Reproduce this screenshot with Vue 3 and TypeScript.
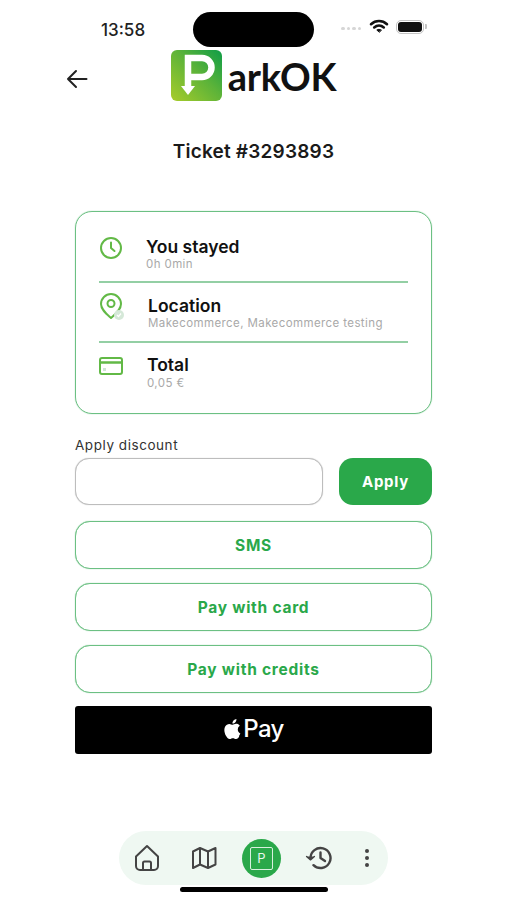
<script setup lang="ts">
interface InfoRow {
  id: string
  title: string
  sub: string
  indent: string
}
const rows: InfoRow[] = [
  { id: 'clock', title: 'You stayed', sub: '0h 0min', indent: 'row-a' },
  { id: 'pin', title: 'Location', sub: 'Makecommerce, Makecommerce testing', indent: 'row-b' },
  { id: 'card', title: 'Total', sub: '0,05 €', indent: 'row-c' },
]
const payOptions = ['SMS', 'Pay with card', 'Pay with credits']
</script>

<template>
  <div class="page">
    <div class="status">
      <span class="time">13:58</span>
      <div class="island"></div>
      <div class="status-right">
        <span class="dots"><i></i><i></i><i></i><i></i></span>
        <svg class="wifi" width="20" height="15" viewBox="0 0 20 15" fill="none" stroke="#111" stroke-linecap="round">
          <path d="M2 5.200C6.600 1 13.400 1 18 5.200" stroke-width="2.600" />
          <path d="M5.200 8.400c2.800-2.400 6.800-2.400 9.600 0" stroke-width="2.600" />
          <path d="M10 13l-2.200-2c1.200-.9 3.200-.9 4.400 0z" fill="#111" stroke-width="1" />
        </svg>
        <span class="battery"><span class="battery-fill"></span></span>
        <span class="battery-cap"></span>
      </div>
    </div>

    <header class="header">
      <svg class="back" width="22" height="20" viewBox="0 0 22 20" fill="none" stroke="#222" stroke-width="2" stroke-linecap="round" stroke-linejoin="round">
        <path d="M20.500 10H2M10 2l-8 8 8 8" />
      </svg>
      <div class="logo">
        <svg width="51" height="51" viewBox="0 0 51 51">
          <defs>
            <linearGradient id="logoGrad" x1="0" y1="1" x2="1" y2="0">
              <stop offset="0" stop-color="#a8cc2a" />
              <stop offset="0.55" stop-color="#5cb339" />
              <stop offset="1" stop-color="#0f9d47" />
            </linearGradient>
          </defs>
          <rect width="51" height="51" rx="6" fill="url(#logoGrad)" />
          <path d="M17 37V8h14a9.500 9.500 0 0 1 0 19H17" fill="none" stroke="#fff" stroke-width="6.500" />
          <path d="M10 36h14L17 45z" fill="#fff" />
        </svg>
        <span class="wordmark">arkOK</span>
      </div>
    </header>

    <h1 class="ticket">Ticket #3293893</h1>

    <main class="content">
      <section class="info-card">
        <div v-for="row in rows" :key="row.id" class="info-row" :class="row.indent">
          <svg v-if="row.id === 'clock'" class="info-icon" width="24" height="24" viewBox="0 0 24 24" fill="none" stroke="#62b946" stroke-width="2" stroke-linecap="round" stroke-linejoin="round">
            <circle cx="12" cy="12" r="10" />
            <path d="M12 6.500V12l3.500 3" />
          </svg>
          <svg v-else-if="row.id === 'pin'" class="info-icon pin-icon" width="26" height="30" viewBox="0 0 26 30" fill="none">
            <path d="M12 25C7 20.500 2 16.500 2 11a10 10 0 0 1 20 0c0 5.500-5 9.500-10 14z" stroke="#62b946" stroke-width="2" stroke-linejoin="round" />
            <circle cx="12" cy="10.500" r="3.500" stroke="#62b946" stroke-width="2" />
            <circle cx="20" cy="22" r="5" fill="#d5e8d8" />
            <path d="M18 22l1.500 1.500 2.500-3" stroke="#fff" stroke-width="1.200" />
          </svg>
          <svg v-else class="info-icon card-icon" width="24" height="18" viewBox="0 0 24 18" fill="none">
            <rect x="1" y="1" width="22" height="16" rx="2" stroke="#62b946" stroke-width="2" />
            <path d="M1 5.500h22" stroke="#62b946" stroke-width="2.500" />
            <rect x="4" y="11" width="3" height="3" fill="#cfe5d3" />
          </svg>
          <div class="info-text">
            <div class="info-title">{{ row.title }}</div>
            <div class="info-sub">{{ row.sub }}</div>
          </div>
        </div>
      </section>

      <label class="discount-label" for="discount">Apply discount</label>
      <div class="discount">
        <input id="discount" class="discount-input" type="text" />
        <button class="apply" type="button">Apply</button>
      </div>

      <button v-for="opt in payOptions" :key="opt" class="outline" type="button">{{ opt }}</button>

      <button class="apple" type="button">
        <svg width="19" height="22" viewBox="3 1 18 22" fill="#fff">
          <path d="M18.710 19.500c-.83 1.240-1.710 2.450-3.050 2.470-1.340.03-1.770-.79-3.290-.79-1.530 0-2 .77-3.270.82-1.310.05-2.300-1.320-3.140-2.530C4.250 17 2.940 12.450 4.700 9.390c.87-1.520 2.430-2.480 4.120-2.510 1.280-.02 2.500.87 3.290.87.78 0 2.210-1.070 3.720-.91.63.03 2.390.25 3.520 1.900-.09.06-2.100 1.230-2.080 3.650.03 2.900 2.540 3.860 2.570 3.870-.03.07-.4 1.380-1.330 2.740M13 3.500c.73-.83 1.940-1.460 2.940-1.500.13 1.170-.34 2.350-1.040 3.190-.69.85-1.830 1.510-2.950 1.420-.15-1.150.41-2.350 1.050-3.110z" />
        </svg>
        <span class="apple-pay">Pay</span>
      </button>
    </main>

    <nav class="nav">
      <svg width="26" height="28" viewBox="0 0 26 28" fill="none" stroke="#444" stroke-width="2" stroke-linejoin="round" stroke-linecap="round">
        <path d="M2 12.500 13 2l11 10.500V22a4 4 0 0 1-4 4H6a4 4 0 0 1-4-4z" />
        <path d="M9 26v-7a1.500 1.500 0 0 1 1.500-1.500h5A1.500 1.500 0 0 1 17 19v7" />
      </svg>
      <svg width="26" height="24" viewBox="0 0 26 24" fill="none" stroke="#444" stroke-width="2" stroke-linejoin="round">
        <path d="M2 5.500 9 2l8 3.500L24.500 2v16.500L17 22l-8-3.500L2 22z" />
        <path d="M9 2v16.500M17 5.500V22" />
      </svg>
      <div class="nav-active">
        <span class="nav-p">P</span>
      </div>
      <svg width="28" height="24" viewBox="0 0 28 24" fill="none" stroke="#444" stroke-width="2.400" stroke-linecap="round" stroke-linejoin="round">
        <path d="M5.500 12a10 10 0 1 1 3 7.200" />
        <path d="M1.500 10.500 5.500 14l4-3.500" fill="#444" stroke-width="1.200" />
        <path d="M15.500 6.500V12l4.500 3" />
      </svg>
      <svg width="6" height="20" viewBox="0 0 6 20" fill="#444">
        <circle cx="3" cy="3" r="2" />
        <circle cx="3" cy="10" r="2" />
        <circle cx="3" cy="17" r="2" />
      </svg>
    </nav>
    <div class="home-indicator"></div>
  </div>
</template>

<style>
html, body { margin: 0; background: #fff; }
</style>

<style scoped>
.page {
  position: relative;
  width: 507px;
  height: 900px;
  overflow: hidden;
  background: #fff;
  display: flex;
  flex-direction: column;
  font-family: Inter, "Liberation Sans", sans-serif;
  color: #111;
}
.status {
  display: grid;
  grid-template-columns: 193px 121px 1fr;
  align-items: center;
  height: 35px;
  margin-top: 12px;
  flex: none;
}
.time {
  font-size: 17px;
  font-weight: 500;
  padding-left: 101px;
  color: #222;
}
.island {
  height: 35px;
  background: #000;
  border-radius: 18px;
}
.status-right {
  display: flex;
  align-items: center;
  padding-left: 27px;
  margin-top: -6px;
}
.dots { display: flex; gap: 2px; margin-right: 8px; margin-top: 4px; }
.dots i { width: 3.500px; height: 3.500px; background: #d6d6d6; border-radius: 50%; }
.wifi { margin-right: 7px; }
.battery {
  width: 28px;
  height: 14px;
  padding: 1px;
  box-sizing: border-box;
  border: 1px solid #c4c4c4;
  border-radius: 5px;
  display: block;
}
.battery-fill { display: block; height: 100%; background: #111; border-radius: 3px; }
.battery-cap {
  width: 1.500px;
  height: 5px;
  margin-left: 1px;
  background: #c4c4c4;
  border-radius: 0 1px 1px 0;
}
.header {
  position: relative;
  flex: none;
  height: 51px;
  margin-top: 3px;
  display: flex;
  justify-content: center;
}
.back { position: absolute; left: 66px; top: 19px; }
.logo {
  display: flex;
  align-items: center;
  gap: 6px;
}
.wordmark {
  font-family: Lato, sans-serif;
  font-size: 38px;
  font-weight: 700;
  line-height: 51px;
  letter-spacing: -0.3px;
  color: #111;
  margin-top: 1px;
}
.ticket {
  flex: none;
  margin: 38px 0 0;
  text-align: center;
  font-size: 19px;
  font-weight: 600;
  line-height: 26px;
  letter-spacing: 0.2px;
  color: #1a1a1a;
}
.content {
  display: flex;
  flex-direction: column;
  padding: 0 75px;
  margin-top: 46px;
  flex: none;
}
.info-card {
  box-sizing: border-box;
  height: 203px;
  padding: 0 23px;
  border: 1px solid #6cc083;
  box-shadow: 0 0 1px #6cc083;
  border-radius: 17px;
  display: flex;
  flex-direction: column;
}
.info-row {
  display: flex;
  align-items: flex-start;
  box-sizing: border-box;
}
.row-a { height: 71px; padding-top: 24px; border-bottom: 2px solid #93cfa4; gap: 23px; }
.row-b { height: 60px; padding-top: 12px; border-bottom: 2px solid #93cfa4; gap: 23px; }
.row-c { flex: 1; padding-top: 11px; gap: 24px; }
.info-icon { flex: none; }
.pin-icon { margin-top: -2px; }
.card-icon { margin-top: 3px; }
.info-text { min-width: 0; }
.info-title {
  font-size: 17.500px;
  font-weight: 600;
  line-height: 22px;
  color: #111;
}
.info-sub {
  font-size: 11.500px;
  line-height: 14px;
  letter-spacing: 0.4px;
  color: #a9a9a9;
  margin-top: -1px;
}
.row-c .info-sub { margin-top: 0; }
.discount-label {
  font-size: 13.500px;
  line-height: 18px;
  letter-spacing: 0.55px;
  margin-top: 22px;
  color: #333;
}
.discount {
  display: flex;
  gap: 16px;
  margin-top: 4px;
  height: 47px;
}
.discount-input {
  flex: 1;
  min-width: 0;
  box-sizing: border-box;
  border: 1px solid #bdbdbd;
  box-shadow: 0 0 1px #bdbdbd;
  border-radius: 14px;
  background: #fff;
  outline: none;
}
.apply {
  width: 93px;
  border: 0;
  border-radius: 14px;
  background: #2aa84a;
  color: #fff;
  font: 700 15px Inter, sans-serif;
  letter-spacing: 0.7px;
}
.outline {
  height: 48px;
  margin-top: 14px;
  box-sizing: border-box;
  background: #fff;
  border: 1px solid #6cc083;
  box-shadow: 0 0 1px #6cc083;
  border-radius: 15px;
  color: #2aa84a;
  font: 700 15.500px Inter, sans-serif;
  letter-spacing: 0.75px;
}
.discount + .outline { margin-top: 16px; }
.apple {
  height: 48px;
  margin-top: 13px;
  border: 0;
  border-radius: 3px;
  background: #000;
  color: #fff;
  display: flex;
  align-items: center;
  justify-content: center;
  gap: 1px;
}
.apple svg { margin-top: -2px; }
.apple-pay {
  font: 500 24px/30px Inter, sans-serif;
  letter-spacing: -0.6px;
  margin-top: -2px;
}
.nav {
  position: absolute;
  left: 119px;
  bottom: 15px;
  width: 269px;
  height: 54px;
  box-sizing: border-box;
  background: #eff8f2;
  border-radius: 27px;
  display: grid;
  grid-template-columns: 56px 57px 59px 55px 42px;
  justify-items: center;
  align-items: center;
}
.nav-active {
  width: 39px;
  height: 39px;
  border-radius: 50%;
  background: #2aa84a;
  display: flex;
  align-items: center;
  justify-content: center;
}
.nav-p {
  width: 23px;
  height: 23px;
  box-sizing: border-box;
  border: 1px solid #d9f0df;
  border-radius: 2px;
  color: #e8f6ec;
  font-size: 13px;
  font-weight: 400;
  line-height: 21px;
  text-align: center;
}
.home-indicator {
  position: absolute;
  left: 180px;
  top: 887px;
  width: 148px;
  height: 5px;
  border-radius: 3px;
  background: #000;
}
</style>
